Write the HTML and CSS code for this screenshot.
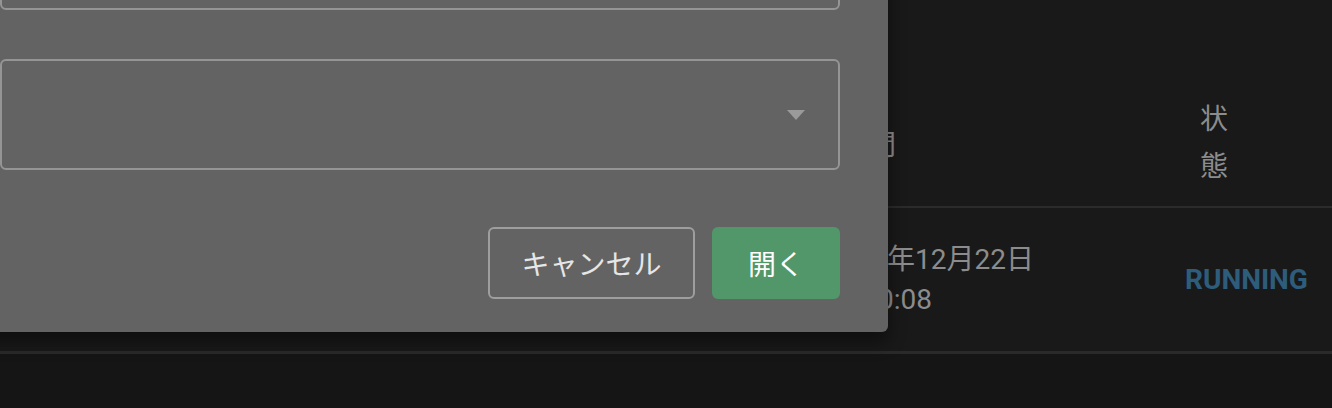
FILE: index.html
```html
<!DOCTYPE html>
<html lang="ja">
<head>
    <meta charset="UTF-8">
    <title>ジョブ一覧</title>
    <link rel="stylesheet" href="styles.css">
</head>
<body>

<div class="page">
    <div class="jobs">
        <div class="jobs-row jobs-head">
            <div class="cell">ジョブ名</div>
            <div class="cell cell-date-head">開始時間</div>
            <div class="cell cell-status-head"><span>状態</span></div>
        </div>
        <div class="jobs-row jobs-body">
            <div class="cell">sample-job</div>
            <div class="cell cell-date">2023年12月22日<br>14:30:08</div>
            <div class="cell cell-status">RUNNING</div>
        </div>
    </div>
</div>

<!-- ダイアログ -->
<div class="dialog">
    <div class="field"></div>
    <div class="select">
        <span class="select-arrow"></span>
    </div>
    <div class="actions">
        <button class="btn btn-cancel">キャンセル</button>
        <button class="btn btn-open">開く</button>
    </div>
</div>

</body>
</html>
```

FILE: styles.css
```css
body {
    margin: 0;
    background: #151515;
    height: 408px;
    overflow: hidden;
    font-family: Roboto, "Noto Sans CJK JP", sans-serif;
}

.page {
    background: #191919;
    padding-top: 80px;
}

.jobs-row {
    display: grid;
    grid-template-columns: 780px 380px 1fr;
    align-items: center;
    color: #8c8c8c;
    font-size: 28px;
}

.jobs-head {
    height: 126px;
    border-bottom: 2px solid #2b2b2b;
}

.jobs-body {
    height: 143px;
    border-bottom: 3px solid #2a2a2a;
}

.cell-date-head {
    padding-left: 4px;
}

.cell-status-head {
    padding-left: 40px;
}

.cell-status-head span {
    display: block;
    width: 28px;
    line-height: 47px;
}

.cell-date {
    padding-left: 44px;
    line-height: 40px;
}

.cell-status {
    padding-left: 25px;
    font-weight: bold;
    color: #2e5d7c;
}

.dialog {
    position: absolute;
    left: -100px;
    top: -60px;
    width: 988px;
    box-sizing: border-box;
    padding: 0 48px 33px 100px;
    background: #636363;
    border-radius: 6px;
    box-shadow: 0 10px 18px rgba(0, 0, 0, 0.45);
}

.field {
    height: 70px;
    box-sizing: border-box;
    border: 2px solid #959595;
    border-radius: 6px;
}

.select {
    height: 111px;
    margin-top: 49px;
    box-sizing: border-box;
    border: 2px solid #959595;
    border-radius: 6px;
    display: flex;
    align-items: center;
    justify-content: flex-end;
    padding-right: 33px;
}

.select-arrow {
    width: 0;
    height: 0;
    border-left: 9px solid transparent;
    border-right: 9px solid transparent;
    border-top: 10px solid #9a9a9a;
}

.actions {
    margin-top: 57px;
    display: flex;
    justify-content: flex-end;
    gap: 17px;
}

.btn {
    height: 72px;
    border-radius: 6px;
    font-family: "Noto Sans CJK JP", sans-serif;
    font-size: 28px;
    cursor: pointer;
}

.btn-cancel {
    width: 207px;
    background: transparent;
    border: 2px solid #9e9e9e;
    color: #e6e6e6;
}

.btn-open {
    width: 128px;
    background: #51976a;
    border: none;
    color: #ffffff;
}
```
